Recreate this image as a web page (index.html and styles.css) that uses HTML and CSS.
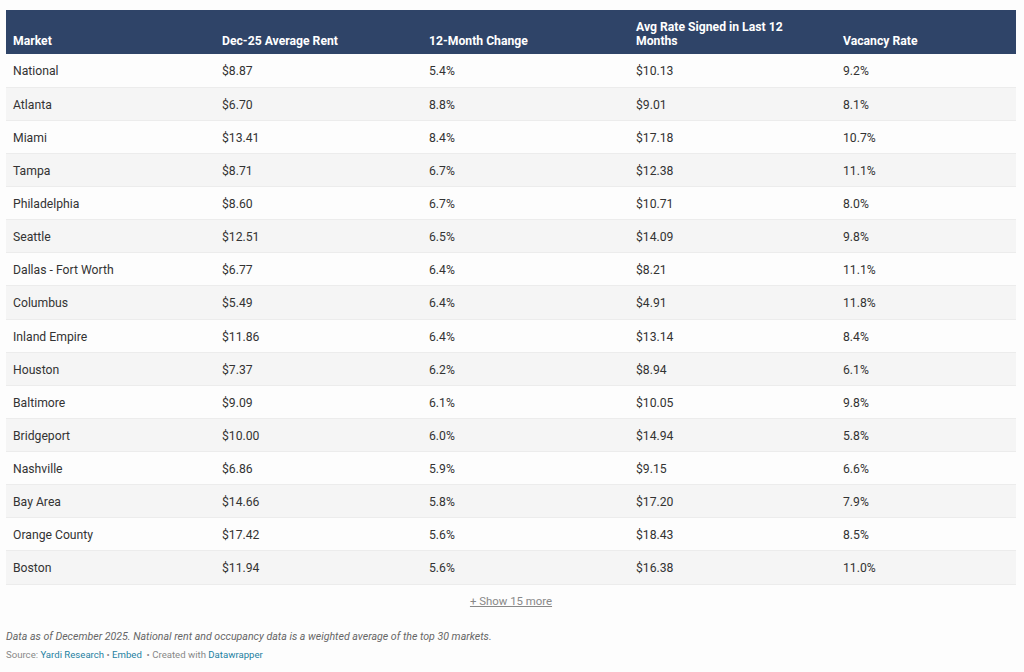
FILE: index.html
```html
<!DOCTYPE html>
<html lang="en">
<head>
<meta charset="utf-8">
<title>Rent table</title>
<link rel="stylesheet" href="styles.css">
</head>
<body>
<div class="chart">
  <table class="tbl">
    <thead>
      <tr>
        <th class="c1">Market</th>
        <th class="c2">Dec-25 Average Rent</th>
        <th class="c3">12-Month Change</th>
        <th class="c4">Avg Rate Signed in Last 12<br>Months</th>
        <th class="c5">Vacancy Rate</th>
      </tr>
    </thead>
    <tbody>
      <tr><td>National</td><td>$8.87</td><td>5.4%</td><td>$10.13</td><td>9.2%</td></tr>
      <tr><td>Atlanta</td><td>$6.70</td><td>8.8%</td><td>$9.01</td><td>8.1%</td></tr>
      <tr><td>Miami</td><td>$13.41</td><td>8.4%</td><td>$17.18</td><td>10.7%</td></tr>
      <tr><td>Tampa</td><td>$8.71</td><td>6.7%</td><td>$12.38</td><td>11.1%</td></tr>
      <tr><td>Philadelphia</td><td>$8.60</td><td>6.7%</td><td>$10.71</td><td>8.0%</td></tr>
      <tr><td>Seattle</td><td>$12.51</td><td>6.5%</td><td>$14.09</td><td>9.8%</td></tr>
      <tr><td>Dallas - Fort Worth</td><td>$6.77</td><td>6.4%</td><td>$8.21</td><td>11.1%</td></tr>
      <tr><td>Columbus</td><td>$5.49</td><td>6.4%</td><td>$4.91</td><td>11.8%</td></tr>
      <tr><td>Inland Empire</td><td>$11.86</td><td>6.4%</td><td>$13.14</td><td>8.4%</td></tr>
      <tr><td>Houston</td><td>$7.37</td><td>6.2%</td><td>$8.94</td><td>6.1%</td></tr>
      <tr><td>Baltimore</td><td>$9.09</td><td>6.1%</td><td>$10.05</td><td>9.8%</td></tr>
      <tr><td>Bridgeport</td><td>$10.00</td><td>6.0%</td><td>$14.94</td><td>5.8%</td></tr>
      <tr><td>Nashville</td><td>$6.86</td><td>5.9%</td><td>$9.15</td><td>6.6%</td></tr>
      <tr><td>Bay Area</td><td>$14.66</td><td>5.8%</td><td>$17.20</td><td>7.9%</td></tr>
      <tr><td>Orange County</td><td>$17.42</td><td>5.6%</td><td>$18.43</td><td>8.5%</td></tr>
      <tr><td>Boston</td><td>$11.94</td><td>5.6%</td><td>$16.38</td><td>11.0%</td></tr>
    </tbody>
  </table>
  <div class="more"><a href="#">+ Show 15 more</a></div>
  <p class="notes">Data as of December 2025. National rent and occupancy data is a weighted average of the top 30 markets.</p>
  <p class="source">Source: <a href="#">Yardi Research</a> • <a href="#">Embed</a> &nbsp;• Created with <a href="#">Datawrapper</a></p>
</div>
</body>
</html>
```

FILE: styles.css
```css
html, body {
  margin: 0;
  padding: 0;
  background: #fdfdfd;
}
body {
  font-family: Roboto, "Liberation Sans", sans-serif;
  color: #333333;
}
.chart {
  padding: 10px 8px 0 6px;
}
.tbl {
  width: 1010px;
  border-collapse: collapse;
  table-layout: fixed;
  font-size: 12.2px;
}
.tbl th,
.tbl td {
  box-sizing: border-box;
}
.tbl th {
  background: #2f4468;
  color: #ffffff;
  font-weight: 700;
  text-align: left;
  vertical-align: bottom;
  line-height: 14px;
  padding: 0 7px 6px 7px;
  height: 44px;
}
.c1 { width: 209px; }
.c2 { width: 207px; }
.c3 { width: 207px; }
.c4 { width: 207px; }
.c5 { width: 180px; }
.tbl td {
  height: 33.125px;
  padding: 3px 7px 0 7px;
  line-height: 15px;
  vertical-align: middle;
  border-bottom: 1px solid #ececec;
  background: #fdfdfd;
}
.tbl tbody tr:nth-child(even) td {
  background: #f5f5f5;
}
.more {
  text-align: center;
  padding-top: 9px;
  height: 24px;
  font-size: 11.4px;
}
.more a {
  color: #888888;
  text-decoration: underline;
}
.notes {
  margin: 12px 0 0 0;
  font-size: 10.6px;
  font-style: italic;
  color: #666666;
  line-height: 14px;
}
.source {
  margin: 4px 0 0 0;
  font-size: 9.6px;
  color: #888888;
  line-height: 14px;
}
.source a {
  color: #1d81a2;
  text-decoration: none;
}
```
